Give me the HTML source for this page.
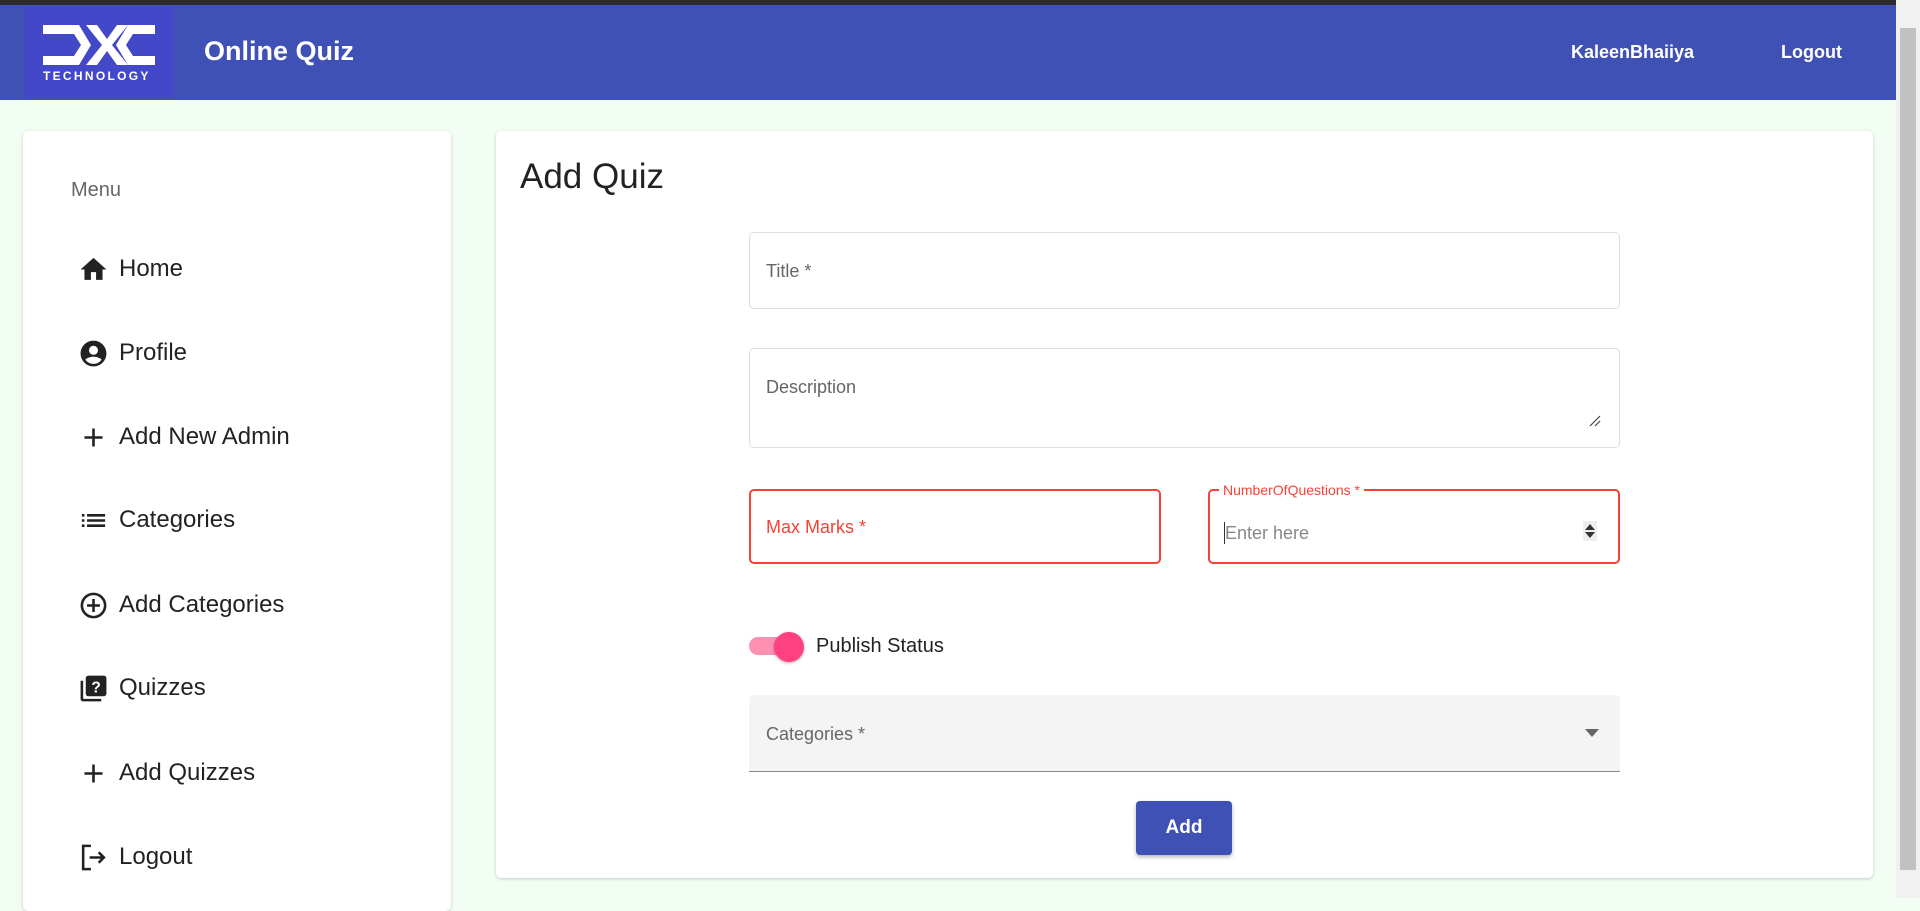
<!DOCTYPE html>
<html><head><meta charset="utf-8"><style>
*{box-sizing:border-box;margin:0;padding:0}
body{width:1920px;height:898px;overflow:hidden;background:#f2fdf4;font-family:"Liberation Sans",Arial,sans-serif;position:relative}
.top{position:absolute;left:0;top:0;width:1920px;height:5px;background:#2b2b2b}
.hdr{position:absolute;left:0;top:5px;width:1896px;height:95px;background:#3f51b5}
.logo{position:absolute;left:24px;top:8px;width:150px;height:90px;background:#4248c8}
.ttl{position:absolute;left:204px;top:36px;color:#fff;font-size:27px;font-weight:bold}
.nav{position:absolute;top:42px;color:#fff;font-size:18px;font-weight:bold}
.sb{position:absolute;left:1896px;top:0;width:24px;height:898px;background:#f1f1f1}
.thumb{position:absolute;left:1900px;top:28px;width:16px;height:842px;background:#c1c1c1}
.card{position:absolute;background:#fff;border-radius:5px;box-shadow:0 1px 3px rgba(0,0,0,.2)}
.menu{position:absolute;left:71px;top:179px;font-size:20px;color:#666}
.item{position:absolute;left:78px;height:30px;display:flex;align-items:center;font-size:24px;color:#222}
.item svg{width:31px;height:31px;margin-right:10px}
.f{position:absolute;border:1px solid #ddd;border-radius:5px;background:#fff}
.lab{position:absolute;font-size:18px;color:#666}
.err{border:2px solid #f44336}
</style></head><body>
<div class="top"></div>
<div class="hdr"></div>
<div class="logo">
<svg width="150" height="90" viewBox="0 0 150 90"><g fill="#fff"><path d="M19 17h36l12 20-12 20H19v-9h31l7-11-7-11H19z"/><path d="M62 17h11l10 14 10-14h11L88 37l16 20H93L83 43 73 57H62l16-20z"/><path d="M131 17H104l-12 20 12 20h27v-9h-22l-7-11 7-11h22z"/></g><text x="19" y="72" fill="#fff" font-size="12" font-weight="bold" font-family="Liberation Sans" letter-spacing="2.3">TECHNOLOGY</text></svg>
</div>
<div class="ttl">Online Quiz</div>
<div class="nav" style="left:1571px">KaleenBhaiiya</div>
<div class="nav" style="left:1781px">Logout</div>
<div class="sb"></div><div class="thumb"></div>

<div class="card" style="left:23px;top:131px;width:428px;height:780px">
</div>
<div class="menu">Menu</div>
<div class="item" style="top:254px"><svg viewBox="0 0 24 24"><path d="M10 20v-6h4v6h5v-8h3L12 3 2 12h3v8z" fill="#222"/></svg>Home</div>
<div class="item" style="top:338px"><svg viewBox="0 0 24 24"><path d="M12 2C6.5 2 2 6.5 2 12s4.5 10 10 10 10-4.5 10-10S17.5 2 12 2zm0 4a3.5 3.5 0 110 7 3.5 3.5 0 010-7zm0 14c-2.6 0-4.9-1.3-6.3-3.3 1.5-1.5 4-2.2 6.3-2.2s4.8.7 6.3 2.2A7.9 7.9 0 0112 20z" fill="#222"/></svg>Profile</div>
<div class="item" style="top:422px"><svg viewBox="0 0 24 24"><path d="M19 13h-6v6h-2v-6H5v-2h6V5h2v6h6z" fill="#222"/></svg>Add New Admin</div>
<div class="item" style="top:505px"><svg viewBox="0 0 24 24"><path d="M3 13h2v-2H3zm0 4h2v-2H3zm0-8h2V7H3zm4 4h14v-2H7zm0 4h14v-2H7zM7 7v2h14V7z" fill="#222"/></svg>Categories</div>
<div class="item" style="top:590px"><svg viewBox="0 0 24 24"><circle cx="12" cy="12" r="9" fill="none" stroke="#222" stroke-width="2"/><path d="M12 7v10M7 12h10" stroke="#222" stroke-width="2"/></svg>Add Categories</div>
<div class="item" style="top:673px"><svg viewBox="0 0 24 24"><path d="M4 6H2v14a2 2 0 002 2h14v-2H4z" fill="#222"/><rect x="6" y="2" width="16" height="16" rx="2" fill="#222"/><text x="14" y="15" fill="#fff" font-size="12" font-weight="bold" text-anchor="middle" font-family="Liberation Sans">?</text></svg>Quizzes</div>
<div class="item" style="top:758px"><svg viewBox="0 0 24 24"><path d="M19 13h-6v6h-2v-6H5v-2h6V5h2v6h6z" fill="#222"/></svg>Add Quizzes</div>
<div class="item" style="top:842px"><svg viewBox="0 0 24 24"><path d="M10 3H4v18h6" fill="none" stroke="#222" stroke-width="2"/><path d="M9 12h11M16 8l4 4-4 4" fill="none" stroke="#222" stroke-width="2"/></svg>Logout</div>

<div class="card" style="left:496px;top:131px;width:1377px;height:747px"></div>
<div style="position:absolute;left:520px;top:157px;font-size:35px;color:#222">Add Quiz</div>

<div class="f" style="left:749px;top:232px;width:871px;height:77px"></div>
<div class="lab" style="left:766px;top:261px">Title *</div>
<div class="f" style="left:749px;top:348px;width:871px;height:100px"></div>
<div class="lab" style="left:766px;top:377px">Description</div>
<svg style="position:absolute;left:1589px;top:415px" width="12" height="12"><path d="M1 11L11 1M6 11l5-5" stroke="#444" stroke-width="1.2"/></svg>

<div class="f err" style="left:749px;top:489px;width:412px;height:75px"></div>
<div class="lab" style="left:766px;top:517px;color:#f44336">Max Marks *</div>
<div class="f err" style="left:1208px;top:489px;width:412px;height:75px"></div>
<div style="position:absolute;left:1219px;top:482px;background:#fff;padding:0 4px;font-size:14px;color:#f44336">NumberOfQuestions *</div>
<div style="position:absolute;left:1224px;top:522px;width:1px;height:22px;background:#333"></div>
<div class="lab" style="left:1225px;top:523px;color:#888">Enter here</div>
<div style="position:absolute;left:1583px;top:521px;width:14px;height:20px;background:#eee"></div>
<svg style="position:absolute;left:1584px;top:523px" width="12" height="16"><path d="M6 1l5 6H1zM6 15l5-6H1z" fill="#333"/></svg>

<div style="position:absolute;left:749px;top:637px;width:42px;height:18px;border-radius:9px;background:#fd90b0"></div>
<div style="position:absolute;left:774px;top:632px;width:30px;height:30px;border-radius:50%;background:#ff4081;box-shadow:0 1px 3px rgba(0,0,0,.3)"></div>
<div style="position:absolute;left:816px;top:635px;font-size:20px;color:#222">Publish Status</div>

<div style="position:absolute;left:749px;top:695px;width:871px;height:77px;background:#f4f4f4;border-radius:5px 5px 0 0;border-bottom:1px solid #888"></div>
<div class="lab" style="left:766px;top:724px">Categories *</div>
<svg style="position:absolute;left:1585px;top:729px" width="14" height="8"><path d="M0 0h14L7 8z" fill="#666"/></svg>

<div style="position:absolute;left:1136px;top:801px;width:96px;height:54px;background:#3f51b5;border-radius:4px;box-shadow:0 2px 4px rgba(0,0,0,.3);color:#fff;font-size:19px;font-weight:bold;display:flex;align-items:center;justify-content:center">Add</div>
</body></html>
